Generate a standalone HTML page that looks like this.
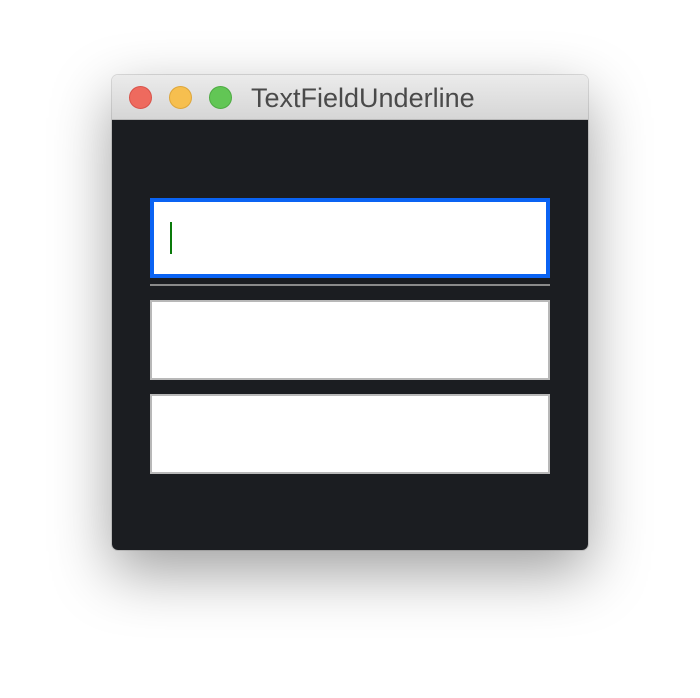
<!DOCTYPE html>
<html><head><style>
html,body{margin:0;padding:0;background:#fff;width:700px;height:698px;overflow:hidden;position:relative;font-family:"Liberation Sans",sans-serif}
.win{position:absolute;left:112px;top:75px;width:476px;height:475px;border-radius:6px;overflow:hidden;box-shadow:0 22px 60px rgba(0,0,0,0.38),0 0 0 1px rgba(0,0,0,0.12)}
.tb{position:absolute;left:0;top:0;width:476px;height:44px;background:linear-gradient(#ebebeb,#d6d6d6);border-bottom:1px solid #b8b8b8}
.dot{position:absolute;top:11px;width:23px;height:23px;border-radius:50%;box-sizing:border-box}
.title{position:absolute;left:139px;top:8px;font-size:27px;color:#4a4a4a}
.content{position:absolute;left:0;top:45px;width:476px;height:430px;background:#1b1d21}
.f{position:absolute;left:38px;width:400px;background:#fff;box-sizing:border-box}
</style></head><body>
<div class="win">
<div class="tb">
<div class="dot" style="left:17px;background:#ee6a5e;border:1px solid #d9534a"></div>
<div class="dot" style="left:57px;background:#f6bf4f;border:1px solid #dea63a"></div>
<div class="dot" style="left:97px;background:#62c655;border:1px solid #4eab43"></div>
<div class="title">TextFieldUnderline</div>
</div>
<div class="content"></div>
<div class="f" style="top:123px;height:80px;border:4px solid #0a63f3"><div style="position:absolute;left:16px;top:20px;width:2px;height:32px;background:#0a7a0a"></div></div>
<div style="position:absolute;left:38px;top:209px;width:400px;height:2px;background:#8a8a8a"></div>
<div class="f" style="top:225px;height:80px;border:2px solid #b8b8b8"></div>
<div class="f" style="top:319px;height:80px;border:2px solid #b8b8b8"></div>
</div>
</body></html>
